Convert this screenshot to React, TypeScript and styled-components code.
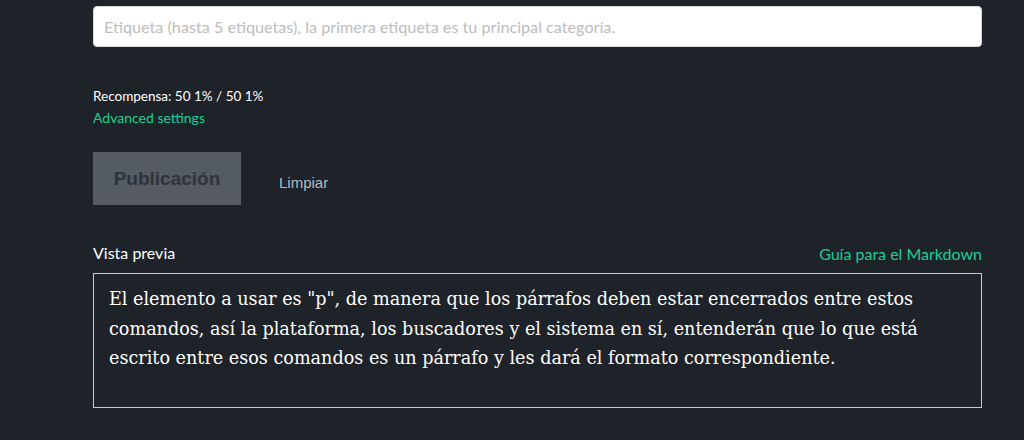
import React from "react";
import styled, { createGlobalStyle } from "styled-components";

const Global = createGlobalStyle`
  html, body { margin: 0; padding: 0; background: #1e2229; }
  body { font-family: Lato, "Open Sans", sans-serif; }
  * { box-sizing: border-box; }
`;

const Page = styled.div`
  width: 1024px;
  height: 440px;
  background: #1e2229;
  padding: 6px 42px 0 93px;
  display: flex;
  flex-direction: column;
  overflow: hidden;
`;

const TagInput = styled.input`
  width: 889px;
  height: 41px;
  border: 1px solid #d8d8d8;
  border-radius: 4px;
  background: #fff;
  padding: 0 10px;
  font-family: Lato, "Open Sans", sans-serif;
  font-size: 16.2px;
  color: #333;
  outline: none;
  &::placeholder { color: #bdbdbd; }
`;

const Reward = styled.div`
  margin-top: 40px;
  font-family: Lato, sans-serif;
  font-size: 13.5px;
  color: #fff;
  line-height: 18px;
`;

const Link = styled.a`
  font-family: Lato, sans-serif;
  font-size: 14px;
  color: #1dcf93;
  text-decoration: none;
  line-height: 18px;
  cursor: pointer;
`;

const AdvLink = styled(Link)`
  margin-top: 4px;
  display: block;
`;

const Actions = styled.div`
  margin-top: 25px;
  display: flex;
  align-items: center;
  gap: 38px;
`;

const PublishButton = styled.button`
  width: 148px;
  height: 53px;
  border: none;
  background: #545b62;
  color: #2d333a;
  font-family: "Liberation Sans", Arial, sans-serif;
  font-weight: bold;
  font-size: 19px;
  padding: 0;
`;

const ClearButton = styled.button`
  border: none;
  background: none;
  padding: 0;
  color: #b4bcc6;
  font-family: "Liberation Sans", Arial, sans-serif;
  font-size: 15px;
  margin-top: 8px;
`;

const PreviewHeader = styled.div`
  margin-top: 38px;
  width: 889px;
  display: flex;
  justify-content: space-between;
  align-items: flex-end;
`;

const PreviewLabel = styled.span`
  font-family: Lato, sans-serif;
  font-size: 16px;
  color: #fff;
  line-height: 20px;
`;

const GuideLink = styled(Link)`
  font-size: 16px;
  line-height: 18px;
`;

const PreviewBox = styled.div`
  margin-top: 10px;
  width: 889px;
  height: 135px;
  border: 1px solid #c9cbcd;
  padding: 11px 15px 10px;
  font-family: "DejaVu Serif", "Liberation Serif", serif;
  font-size: 17.6px;
  line-height: 29.7px;
  color: #fff;
`;

export default function App() {
  return (
    <>
      <Global />
      <Page>
        <TagInput placeholder="Etiqueta (hasta 5 etiquetas), la primera etiqueta es tu principal categoría." />
        <Reward>Recompensa: 50 1% / 50 1%</Reward>
        <AdvLink>Advanced settings</AdvLink>
        <Actions>
          <PublishButton>Publicación</PublishButton>
          <ClearButton>Limpiar</ClearButton>
        </Actions>
        <PreviewHeader>
          <PreviewLabel>Vista previa</PreviewLabel>
          <GuideLink>Guía para el Markdown</GuideLink>
        </PreviewHeader>
        <PreviewBox>
          El elemento a usar es "p", de manera que los párrafos deben estar encerrados entre estos comandos, así la plataforma, los buscadores y el sistema en sí, entenderán que lo que está escrito entre esos comandos es un párrafo y les dará el formato correspondiente.
        </PreviewBox>
      </Page>
    </>
  );
}
